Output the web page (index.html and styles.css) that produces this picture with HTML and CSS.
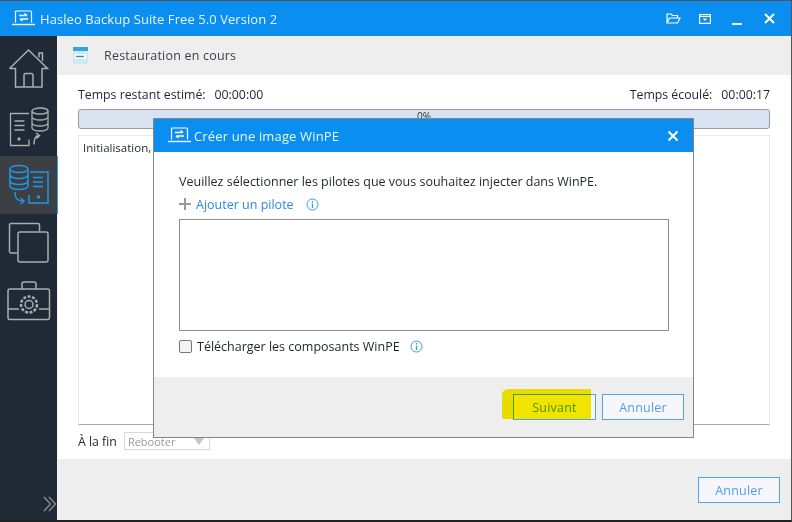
FILE: index.html
```html
<!DOCTYPE html>
<html lang="fr">
<head>
<meta charset="utf-8">
<title>Hasleo Backup Suite</title>
<link rel="stylesheet" href="styles.css">
</head>
<body>
<div class="window">
  <header class="titlebar">
    <svg class="logo" width="25" height="17" viewBox="0 0 25 17" fill="none" stroke="#fff"><path d="M4.5 12.5V2a1 1 0 0 1 1-1h14a1 1 0 0 1 1 1v10.500" stroke-width="1.2"/><path d="M1 14.500h23" stroke-width="1.4"/><path d="M8 5.500h8M13.500 3.500l2.500 2M17 9H9M11.500 11l-2.500-2" stroke-width="1.4"/></svg>
    <span class="app-title">Hasleo Backup Suite Free 5.0 Version 2</span>
    <div class="win-tools">
      <svg class="tool-folder" width="15" height="11" viewBox="0 0 15 11" fill="none" stroke="#fff" stroke-width="1.2"><path d="M1 10V1h4l1.500 1.500h5V5M1 10l2.500-5H14l-2.500 5z"/></svg>
      <svg class="tool-box" width="12" height="10" viewBox="0 0 12 10" fill="none" stroke="#fff" stroke-width="1.100"><path d="M.6.6h10.800v8.800H.6zM.6 2.500h10.800"/><path d="M3.800 4.500h4.400L6 7z" fill="#fff" stroke="none"/></svg>
      <svg class="tool-min" width="10" height="12" viewBox="0 0 10 12" fill="none" stroke="#fff" stroke-width="1.800"><path d="M0 11h10"/></svg>
      <svg class="tool-close" width="11" height="11" viewBox="0 0 11 11" fill="none" stroke="#fff" stroke-width="2"><path d="M1 1l9 9M10 1l-9 9"/></svg>
    </div>
  </header>
  <div class="main">
    <nav class="sidebar">
      <div class="nav-item nav-home">
        <svg width="42" height="42" viewBox="0 0 42 42" fill="none" stroke="#a9adb1" stroke-width="1.500"><path d="M1.500 20.500L20.500 2l19 18.500H34M1.500 20.500H7.500V39H34V20.500"/><path d="M31 9.500V5h3.500v8"/><path d="M16 39V27a1.500 1.500 0 0 1 1.500-1.500h6A1.500 1.500 0 0 1 25 27v12"/></svg>
      </div>
      <div class="nav-item">
        <svg width="42" height="42" viewBox="0 0 42 42" fill="none" stroke="#a9adb1" stroke-width="1.300"><path d="M21 7.500H2.500v32H21v-6"/><path d="M6.500 15h10M6.500 19.500h10M6.500 24h10"/><circle cx="11" cy="33" r="1" fill="#a9adb1"/><ellipse cx="32" cy="5" rx="8" ry="3"/><path d="M24 5v17c0 1.500 3.500 3 8 3s8-1.500 8-3V5M24 11c0 1.500 3.500 3 8 3s8-1.500 8-3M24 17c0 1.500 3.500 3 8 3s8-1.500 8-3"/><path d="M26 38.500c0-6 1-9 5-9m-3-2.500l3.500 2.500-3 3" stroke-width="1.500"/></svg>
      </div>
      <div class="nav-item nav-active">
        <svg width="42" height="42" viewBox="0 0 42 42" fill="none" stroke="#1f97e6" stroke-width="1.500"><ellipse cx="11" cy="5" rx="9" ry="3.500"/><path d="M2 5v17c0 2 4 3.500 9 3.500s9-1.500 9-3.500V5M2 11c0 2 4 3.500 9 3.500s9-1.500 9-3.500M2 17c0 2 4 3.500 9 3.500s9-1.500 9-3.500"/><path d="M22 8h18v31H21v-8"/><path d="M25 13.500h10M25 18h10M25 22.500h10"/><circle cx="30.500" cy="33" r="1" fill="#1f97e6"/><path d="M7 28c0 5 1 9 9 9m-3.500-3l3.500 3-3.500 3"/></svg>
      </div>
      <div class="nav-item">
        <svg width="42" height="42" viewBox="0 0 42 42" fill="none" stroke="#a9adb1" stroke-width="1.500"><path d="M9 31H3a1.500 1.500 0 0 1-1.500-1.500V3A1.500 1.500 0 0 1 3 1.500h27A1.500 1.500 0 0 1 31.500 3v6"/><rect x="10" y="10" width="30" height="30" rx="2"/></svg>
      </div>
      <div class="nav-item">
        <svg width="44" height="40" viewBox="0 0 44 40" fill="none" stroke="#a9adb1" stroke-width="1.500"><rect x="1" y="8" width="41.500" height="30.500" rx="2"/><path d="M15 8V3a2 2 0 0 1 2-2h10a2 2 0 0 1 2 2v5"/><path d="M1 28h11M32 28h10"/><circle cx="22" cy="23.500" r="4"/><circle cx="22" cy="23.500" r="8" stroke-width="2.500" stroke-dasharray="3 1.500"/></svg>
      </div>
      <svg class="expand" width="14" height="16" viewBox="0 0 14 16" fill="none" stroke="#8f9499" stroke-width="1.200"><path d="M1 1l6.500 7L1 15M6 1l6.500 7L6 15"/></svg>
    </nav>
    <section class="content">
      <div class="page-head">
        <svg width="15" height="17" viewBox="0 0 15 17"><rect width="15" height="17" fill="#cde9f3"/><rect width="15" height="4" fill="#35a7d6"/><rect x="2" y="7" width="11" height="5" fill="#fff"/><path d="M3 9.500h8" stroke="#3a8fb5" stroke-width="1.500"/></svg>
        <span class="page-title">Restauration en cours</span>
      </div>
      <div class="page-body">
        <div class="times">
          <span><span class="time-label">Temps restant estimé:</span>00:00:00</span>
          <span><span class="time-label">Temps écoulé:</span>00:00:17</span>
        </div>
        <div class="progress">0%</div>
        <div class="log">Initialisation,</div>
        <div class="end-row">
          <span>À la fin</span>
          <div class="select"><span>Rebooter</span><i class="caret"></i></div>
        </div>
      </div>
      <div class="page-foot">
        <button class="btn">Annuler</button>
      </div>
    </section>
  </div>
</div>

<div class="dialog">
  <div class="dlg-title">
    <svg width="25" height="17" viewBox="0 0 25 17" fill="none" stroke="#fff"><path d="M4.500 12.500V2a1 1 0 0 1 1-1h14a1 1 0 0 1 1 1v10.500" stroke-width="1.200"/><path d="M1 14.500h23" stroke-width="1.400"/><path d="M8 5.500h8M13.500 3.500l2.500 2M17 9H9M11.500 11l-2.500-2" stroke-width="1.400"/></svg>
    <span class="dlg-name">Créer une image WinPE</span>
    <svg class="dlg-close" width="12" height="12" viewBox="0 0 12 12" fill="none" stroke="#fff" stroke-width="2"><path d="M1.500 1.500l9 9M10.500 1.500l-9 9"/></svg>
  </div>
  <div class="dlg-body">
    <p class="dlg-lead">Veuillez sélectionner les pilotes que vous souhaitez injecter dans WinPE.</p>
    <div class="add-row">
      <svg width="12" height="12" viewBox="0 0 12 12" stroke="#9a9a9a" stroke-width="2"><path d="M6 0v12M0 6h12"/></svg>
      <span class="add-link">Ajouter un pilote</span>
      <svg class="info" width="13" height="13" viewBox="0 0 13 13" fill="none" stroke="#3b9ae6"><circle cx="6.500" cy="6.500" r="5.500"/><path d="M6.500 5.500v4.500M6.500 3v1.500" stroke-width="1.300"/></svg>
    </div>
    <div class="driver-list"></div>
    <div class="check-row">
      <span class="check"></span>
      <span>Télécharger les composants WinPE</span>
      <svg class="info" width="13" height="13" viewBox="0 0 13 13" fill="none" stroke="#3b9ae6"><circle cx="6.500" cy="6.500" r="5.500"/><path d="M6.500 5.500v4.500M6.500 3v1.500" stroke-width="1.300"/></svg>
    </div>
  </div>
  <div class="dlg-foot">
    <button class="btn btn-next">Suivant</button>
    <button class="btn">Annuler</button>
  </div>
</div>
<div class="highlight"></div>
</body>
</html>
```
FILE: styles.css
```css
* { box-sizing: border-box; }
html, body { margin: 0; width: 792px; height: 522px; overflow: hidden; background: #fff; }
body { font-family: "Open Sans", "Noto Sans", sans-serif; font-size: 12px; color: #1f2430; position: relative; }
.window { width: 792px; height: 522px; display: flex; flex-direction: column; border-top: 1px solid #555; border-bottom: 2px solid #222; border-right: 1px solid #555; }
.titlebar { height: 35px; flex: none; background: #0a8ff0; display: flex; align-items: center; padding: 0 16px 0 11px; color: #eaf5ff; }
.logo { flex: none; }
.app-title { margin-left: 4px; font-size: 13px; letter-spacing: .07px; }
.win-tools { margin-left: auto; display: flex; align-items: center; }
.tool-box { margin-left: 18px; }
.tool-min { margin-left: 21px; }
.tool-close { margin-left: 22px; }
.main { flex: 1; display: flex; min-height: 0; }
.sidebar { width: 58px; flex: none; background: #1f2a36; position: relative; border-right: 1px solid #f4f4f4; }
.nav-item { display: flex; justify-content: center; align-items: center; height: 58px; padding-left: 1px; }
.nav-home { height: 62px; padding-top: 4px; }
.nav-active { background: #3c4044; border-right: 1px solid #2f9bee; margin-right: -1px; }
.expand { position: absolute; left: 43px; bottom: 8px; }
.content { flex: 1; display: flex; flex-direction: column; min-width: 0; }
.page-head { height: 39px; flex: none; background: #eeeeee; display: flex; align-items: center; padding-left: 15px; gap: 16px; }
.page-title { font-size: 12.500px; color: #3b3f46; letter-spacing: .2px; }
.page-body { flex: 1; padding: 11px 21px 0 20px; display: flex; flex-direction: column; min-height: 0; }
.times { display: flex; justify-content: space-between; height: 20px; font-size: 12.300px; }
.time-label { margin-right: 9px; }
.progress { height: 20px; background: #d8e3f1; border: 1px solid #9b9b9b; border-radius: 3px; text-align: center; font-size: 10px; line-height: 13px; flex: none; margin-top: 3px; color: #333; }
.log { flex: none; height: 290px; margin-top: 6px; border: 1px solid #ececec; border-bottom-color: #aaa; padding: 4px 4px; font-size: 11.500px; line-height: 16px; }
.end-row { display: flex; align-items: center; gap: 7px; margin-top: 7px; height: 18px; font-size: 12.300px; }
.select { width: 86px; height: 18px; border: 1px solid #d8d8d8; display: flex; align-items: center; justify-content: space-between; padding: 0 5px 0 3px; color: #9a9a9a; font-size: 11px; }
.caret { width: 0; height: 0; border: 5px solid transparent; border-top: 7px solid #c4c4c4; border-bottom: 0; }
.page-foot { height: 61px; flex: none; background: #eeeeee; display: flex; justify-content: flex-end; align-items: flex-start; padding: 18px 11px 0 0; }
.btn { width: 82px; height: 26px; padding: 0; border: 1px solid #4da6ea; background: #f7f7fb; color: #4d9fe6; font: 12.500px "Open Sans", "Noto Sans", sans-serif; letter-spacing: .2px; }
.dialog { position: absolute; left: 153px; top: 118px; width: 541px; height: 320px; background: #fff; border: 1px solid #858585; display: flex; flex-direction: column; }
.dlg-title { height: 33px; flex: none; background: #0a8ff0; display: flex; align-items: center; padding: 0 14px 0 13px; color: #eaf5ff; font-size: 13px; }
.dlg-name { margin-left: 2px; letter-spacing: .15px; }
.dlg-close { margin-left: auto; }
.dlg-body { flex: 1; padding: 21px 24px 0 25px; }
.dlg-lead { margin: 0; font-size: 12.500px; line-height: 17px; white-space: nowrap; }
.add-row { display: flex; align-items: center; height: 18px; margin-top: 5px; }
.add-link { color: #2f88e0; margin-left: 5px; font-size: 12.500px; }
.info { margin-left: 12px; }
.driver-list { height: 112px; margin-top: 6px; border: 1px solid #8e8e8e; width: 490px; }
.check-row { display: flex; align-items: center; height: 18px; margin-top: 6px; font-size: 12.500px; }
.check { width: 13px; height: 13px; border: 1px solid #777; border-radius: 2px; background: #f4f4f4; margin-right: 5px; }
.check-row .info { margin-left: 10px; }
.dlg-foot { height: 60px; flex: none; background: #eeeeee; display: flex; justify-content: flex-end; align-items: flex-start; gap: 6px; padding: 17px 9px 0 0; }
.btn-next { width: 83px; }
.highlight { position: absolute; left: 502px; top: 389px; width: 89px; height: 30px; background: #f8ec00; mix-blend-mode: multiply; border-radius: 6px 0 0 2px; }
```
